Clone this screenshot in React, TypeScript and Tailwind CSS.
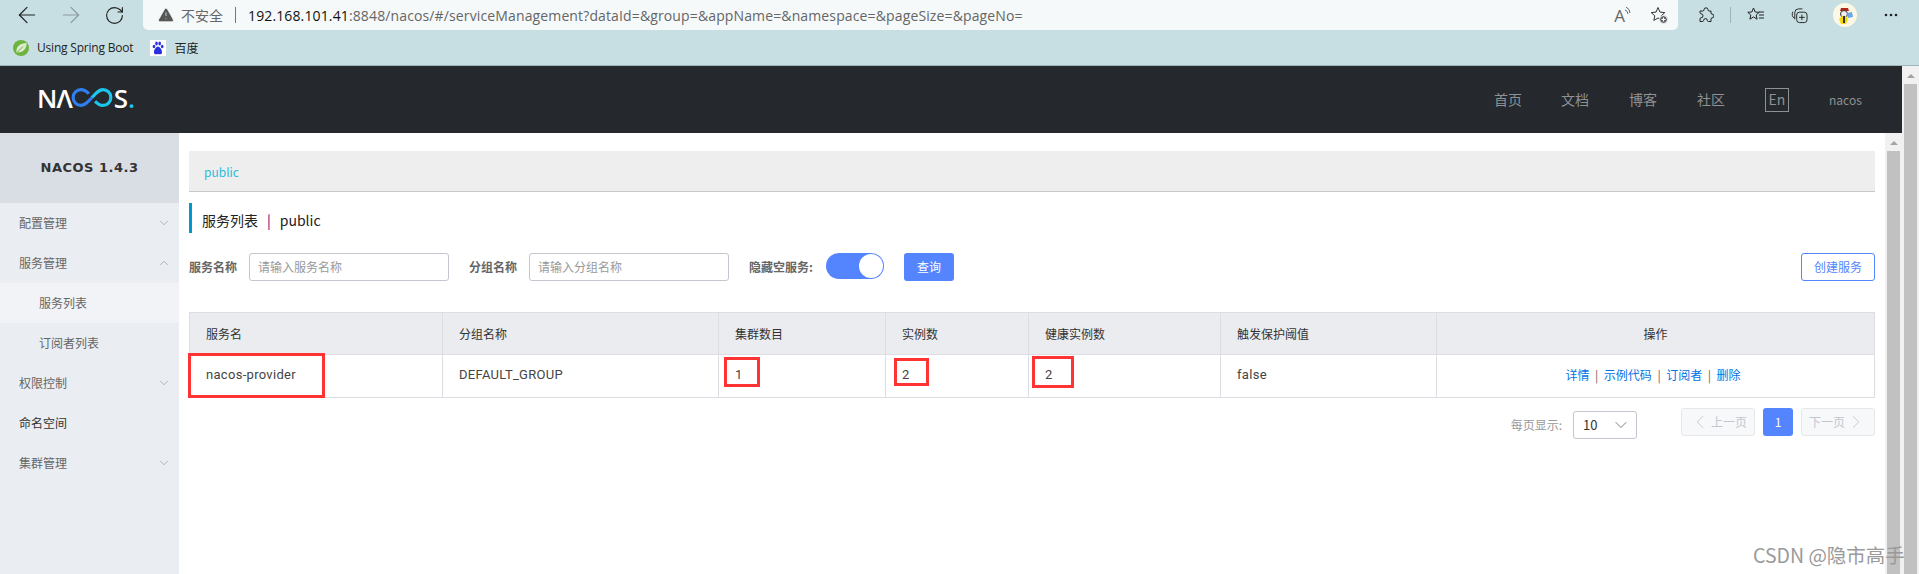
import { ArrowLeft, ArrowRight, ChevronDown, ChevronLeft, ChevronRight, ChevronUp, RotateCw, TriangleAlert } from "lucide-react";

const MENU = [
  { label: "配置管理", arrow: "down" },
  { label: "服务管理", arrow: "up" },
  { label: "服务列表", sub: true, active: true },
  { label: "订阅者列表", sub: true },
  { label: "权限控制", arrow: "down" },
  { label: "命名空间", dark: true },
  { label: "集群管理", arrow: "down" },
];

const COLUMNS = [
  { title: "服务名", width: "w-[253px]", value: "nacos-provider" },
  { title: "分组名称", width: "w-[276px]", value: "DEFAULT_GROUP" },
  { title: "集群数目", width: "w-[167px]", value: "1" },
  { title: "实例数", width: "w-[143px]", value: "2" },
  { title: "健康实例数", width: "w-[192px]", value: "2" },
  { title: "触发保护阈值", width: "w-[216px]", value: "false" },
];

function BrowserChrome() {
  return (
    <div className="h-[66px] border-b border-[#9db4b8] bg-[#c7dfe3]">
      <div className="flex h-[30px] items-center">
        <div className="flex w-[143px] shrink-0 items-center pl-[14px]">
          <ArrowLeft size={26} strokeWidth={1.1} className="text-[#222]" />
          <ArrowRight size={26} strokeWidth={1.1} className="ml-[18px] text-[#8c9a9d]" />
          <RotateCw size={21} strokeWidth={1.3} className="ml-[20px] text-[#222]" />
        </div>
        <div className="flex h-[30px] w-[1535px] shrink-0 items-center rounded-b-[5px] bg-[#f5f9fa] pl-[14px] pr-[10px]">
          <TriangleAlert size={18} fill="#555" strokeWidth={1} className="text-[#f5f9fa]" />
          <span className="ml-[6px] text-[14px] text-[#666]">不安全</span>
          <span className="mx-[12px] h-[16px] w-px bg-[#777]" />
          <span className="text-[14px] tracking-[0.13px] text-[#666] font-['Open_Sans','Noto_Sans_CJK_SC',sans-serif]">
            <span className="text-[#111]">192.168.101.41</span>:8848/nacos/#/serviceManagement?dataId=&amp;group=&amp;appName=&amp;namespace=&amp;pageSize=&amp;pageNo=
          </span>
          <span className="ml-auto flex items-center gap-[19px] text-[#666]">
            <span className="flex items-start text-[17px] leading-none font-['Open_Sans',sans-serif]">
              A
              <svg width="6" height="12" viewBox="0 0 6 12" fill="none" stroke="#666">
                <path d="M0 3q3 1 3 4M1 0q4 2 4 6" />
              </svg>
            </span>
            <svg width="18" height="18" viewBox="0 0 18 18" fill="none" stroke="#333" strokeWidth="1">
              <path d="M8 1.500l2 4.600 4.800.5-3.600 3.200 1 4.600L8 12l-4.200 2.400 1-4.600L1.200 6.600l4.800-.5z" />
              <circle cx="13.500" cy="13.500" r="4" fill="#666" stroke="#f5f9fa" />
              <path d="M13.500 11.500v4M11.500 13.500h4" stroke="#fff" />
            </svg>
          </span>
        </div>
        <div className="flex flex-1 items-center pl-[20px] text-[#222]">
          <svg width="16" height="16" viewBox="0 0 16 16" fill="none" stroke="#222" strokeLinejoin="round">
            <path d="M6 2.800a2 2 0 0 1 4 0c0 .8.500 1.200 1.200 1.200h1.800v2c0 .7.300 1 1 1.100a1.900 1.900 0 0 1 0 3.800c-.7.1-1 .4-1 1.100v2.500h-2.500c-.7 0-1-.3-1.100-1a1.900 1.900 0 0 0-3.800 0c-.1.700-.4 1-1.100 1H2v-2.700c0-.6.400-.9 1-1a2 2 0 0 0 0-4c-.6-.1-1-.4-1-1V4h2.800C5.500 4 6 3.600 6 2.800z" />
          </svg>
          <span className="ml-[16px] h-[16px] w-px bg-[#9db4b8]" />
          <svg className="ml-[16px]" width="18" height="16" viewBox="0 0 18 16" fill="none" stroke="#222">
            <path d="M6.500 1l1.700 4 4 .3-3 2.700.9 4.200-3.600-2.300-3.600 2.300.9-4.200-3-2.700 4-.3z" />
            <path d="M12 5h5M12 8h5M12 11h5" />
          </svg>
          <svg className="ml-[26px]" width="17" height="17" viewBox="0 0 18 18" fill="none" stroke="#222">
            <path d="M4 13V6a4 4 0 0 1 4-4h4M3.500 12c-2-1.500-3-4-1.500-7" />
            <rect x="6" y="5.500" width="11" height="11" rx="3" />
            <path d="M11.500 8v6M8.500 11h6" />
          </svg>
          <span className="ml-[25px] flex h-[24px] w-[24px] items-center justify-center overflow-hidden rounded-full bg-[#fdf8e4]">
            <svg width="18" height="20" viewBox="0 0 18 20">
              <path d="M5 3h7l1 3H4z" fill="#b3261e" />
              <circle cx="8" cy="9" r="3.500" fill="#eee" stroke="#333" />
              <path d="M3 14l3-3h4l2 3-2 5H5z" fill="#f5d90a" />
              <path d="M11 8l5-1 1 5-5 1z" fill="#6ba7e8" />
              <path d="M7 11h2v7H7z" fill="#333" />
            </svg>
          </span>
          <svg className="ml-[27px]" width="14" height="4" viewBox="0 0 14 4" fill="#222">
            <circle cx="2" cy="2" r="1.300" />
            <circle cx="7" cy="2" r="1.300" />
            <circle cx="12" cy="2" r="1.300" />
          </svg>
        </div>
      </div>
      <div className="flex h-[36px] items-center pb-[1px] pl-[13px] text-[12px] text-[#222]">
        <svg width="16" height="16" viewBox="0 0 16 16">
          <circle cx="8" cy="8" r="8" fill="#6db33f" />
          <path d="M3.500 12.500C2.500 7 7 3 13.500 3c.5 5.500-3.500 10-10 9.500z" fill="#dcebcf" />
          <path d="M4 12.500L10 6.500" stroke="#6db33f" />
        </svg>
        <span className="ml-[8px] tracking-[-0.2px] font-['Open_Sans',sans-serif]">Using Spring Boot</span>
        <span className="ml-[17px] flex h-[16px] w-[16px] items-center justify-center bg-white">
          <svg width="14" height="14" viewBox="0 0 14 14" fill="#2932e1">
            <ellipse cx="3" cy="5.500" rx="1.300" ry="1.800" />
            <ellipse cx="5.500" cy="2.500" rx="1.300" ry="1.900" />
            <ellipse cx="8.700" cy="2.500" rx="1.300" ry="1.900" />
            <ellipse cx="11.200" cy="5.500" rx="1.300" ry="1.800" />
            <path d="M7 5.500c2 0 4.500 4 4 6.500-.4 1.500-2.500 1.400-4 1-1.500.4-3.600.5-4-1-.5-2.500 2-6.500 4-6.500z" />
          </svg>
        </span>
        <span className="ml-[8px]">百度</span>
      </div>
    </div>
  );
}

function NacosLogo() {
  return (
    <div aria-label="NACOS" className="mb-[4px] flex items-center text-[26px] leading-none font-semibold text-white font-['Open_Sans',sans-serif]">
      <span>N</span>
      <span className="-ml-[1px]">Λ</span>
      <svg width="44" height="21" viewBox="0 0 42 20" fill="none" strokeWidth="3" className="-ml-[3px]">
        <path d="M18 6.500C15 3 13 2.500 10.500 2.500a7.500 7.500 0 0 0 0 15c4 0 6.500-3 10.500-7.500" stroke="#2f7ff0" />
        <path d="M21 10c4-4.500 6.500-7.500 10.500-7.500a7.500 7.500 0 0 1 0 15c-2.500 0-4.500-.5-7.500-4" stroke="#1cc6ee" />
      </svg>
      <span>S</span>
      <span className="text-[#1cc6ee]">.</span>
    </div>
  );
}

function TopNav() {
  return (
    <div className="flex h-[67px] items-center bg-[#25292e] pl-[37px]">
      <NacosLogo />
      <div className="ml-auto flex items-center text-[14px] text-[#8f9193]">
        <span>首页</span>
        <span className="ml-[39px]">文档</span>
        <span className="ml-[40px]">博客</span>
        <span className="ml-[40px]">社区</span>
        <span className="ml-[40px] flex h-[24px] w-[24px] items-center justify-center border border-[#8f9193] pb-[1px] text-[14px]">En</span>
        <span className="ml-[40px] mr-[40px] w-[33px] text-[12px]">nacos</span>
      </div>
    </div>
  );
}

function Sidebar() {
  return (
    <div className="w-[179px] shrink-0 bg-[#eaedf1]">
      <div className="flex h-[70px] items-center justify-center bg-[#d9dde4] text-[13px] font-bold tracking-[0.5px] text-[#333] font-['DejaVu_Sans',sans-serif]">
        NACOS 1.4.3
      </div>
      {MENU.map((m) => (
        <div
          key={m.label}
          className={`flex h-[40px] items-center justify-between text-[12px] ${m.sub ? "pl-[39px]" : "pl-[19px]"} pr-[8px] ${m.active ? "bg-[#f2f3f7]" : ""} ${m.dark ? "text-[#333]" : "text-[#666]"}`}
        >
          <span>{m.label}</span>
          {m.arrow === "down" && <ChevronDown size={14} strokeWidth={1} className="text-[#888]" />}
          {m.arrow === "up" && <ChevronUp size={14} strokeWidth={1} className="text-[#888]" />}
        </div>
      ))}
    </div>
  );
}

function Filters() {
  return (
    <div className="mt-[20px] flex h-[28px] items-start text-[12px]">
      <span className="w-[60px] font-semibold leading-[28px] text-[#666]">服务名称</span>
      <div className="flex h-[28px] w-[200px] items-center rounded-[3px] border border-[#c4c6cf] pl-[8px] text-[#999]">请输入服务名称</div>
      <span className="ml-[20px] w-[60px] font-semibold leading-[28px] text-[#666]">分组名称</span>
      <div className="flex h-[28px] w-[200px] items-center rounded-[3px] border border-[#c4c6cf] pl-[8px] text-[#999]">请输入分组名称</div>
      <span className="ml-[20px] w-[77px] font-semibold leading-[28px] text-[#666]">隐藏空服务:</span>
      <div className="flex h-[26px] w-[58px] items-center justify-end rounded-full bg-[#5584ff] pr-[1px]">
        <div className="h-[24px] w-[24px] rounded-full bg-white" />
      </div>
      <button className="ml-[20px] h-[28px] w-[50px] rounded-[3px] bg-[#5584ff] text-white">查询</button>
      <button className="ml-auto h-[28px] w-[74px] rounded-[3px] border border-[#5584ff] bg-white text-[#5584ff]">创建服务</button>
    </div>
  );
}

function ServiceTable() {
  return (
    <div className="mt-[31px] border border-[#dcdee3] text-[12px]">
      <div className="flex h-[42px] border-b border-[#dcdee3] bg-[#ebecf0] text-[#333]">
        {COLUMNS.map((c) => (
          <div key={c.title} className={`${c.width} flex shrink-0 items-center border-r border-[#dcdee3] pl-[16px]`}>{c.title}</div>
        ))}
        <div className="flex flex-1 items-center justify-center">操作</div>
      </div>
      <div className="flex h-[42px] text-[#333]">
        {COLUMNS.map((c) => (
          <div key={c.title} className={`${c.width} flex shrink-0 items-center border-r border-[#dcdee3] pb-[2px] pl-[16px] text-[13px] tracking-[0.3px] text-[#444] font-['Roboto',sans-serif]`}>{c.value}</div>
        ))}
        <div className="flex flex-1 items-center justify-center pb-[2px] pr-[5px] text-[#0073e6]">
          <span>详情</span>
          <span className="mx-[5.500px] text-[#666]">|</span>
          <span>示例代码</span>
          <span className="mx-[5.500px] text-[#666]">|</span>
          <span>订阅者</span>
          <span className="mx-[5.500px] text-[#666]">|</span>
          <span>删除</span>
        </div>
      </div>
    </div>
  );
}

function Pagination() {
  return (
    <div className="mt-[10px] flex items-start justify-end text-[12px]">
      <span className="mt-[3px] leading-[28px] text-[#999]">每页显示:</span>
      <div className="ml-[11px] mt-[3px] flex h-[28px] w-[64px] items-center justify-between rounded-[3px] border border-[#c4c6cf] pl-[9px] pr-[5px] text-[#333]">
        <span className="text-[13px]">10</span>
        <ChevronDown size={20} strokeWidth={1} className="text-[#666]" />
      </div>
      <div className="ml-[44px] flex h-[28px] w-[74px] items-center justify-center rounded-[3px] border border-[#e6e7eb] bg-[#f7f8fa] text-[#c4c6cf]">
        <ChevronLeft size={22} strokeWidth={1} />
        上一页
      </div>
      <div className="ml-[8px] flex h-[28px] w-[30px] items-center justify-center rounded-[3px] bg-[#5584ff] text-white">1</div>
      <div className="ml-[8px] flex h-[28px] w-[74px] items-center justify-center rounded-[3px] border border-[#e6e7eb] bg-[#f7f8fa] text-[#c4c6cf]">
        下一页
        <ChevronRight size={22} strokeWidth={1} />
      </div>
    </div>
  );
}

function Scrollbar() {
  return (
    <div className="flex w-[17px] shrink-0 flex-col items-center bg-[#f1f1f1]">
      <div className="mt-[8px] h-0 w-0 border-x-[4px] border-b-[4px] border-x-transparent border-b-[#a3a3a3]" />
      <div className="mt-[6px] w-[13px] flex-1 bg-[#c1c1c1]" />
    </div>
  );
}

function RedBox({ className }: { className: string }) {
  return <div className={`absolute border-[3px] border-[#ff3333] ${className}`} />;
}

export default function App() {
  return (
    <div className="relative flex h-[574px] w-[1919px] flex-col overflow-hidden bg-white font-['Noto_Sans_CJK_SC','Noto_Sans',sans-serif]">
      <BrowserChrome />
      <div className="flex min-h-0 flex-1">
        <div className="flex min-w-0 flex-1 flex-col">
          <TopNav />
          <div className="flex min-h-0 flex-1">
            <Sidebar />
            <div className="flex-1 pl-[10px] pr-[10px] pt-[18px]">
              <div className="flex h-[41px] items-center border-b border-[#c9c9c9] bg-[#eeeeee] pl-[15px] pt-[2px] text-[12px] text-[#2dbcdc]">public</div>
              <div className="mt-[11px] flex h-[30px] items-center border-l-[3px] border-[#0099cc] pl-[10px] pt-[5px] text-[14px] text-[#222]">
                服务列表<span className="mx-[9px] text-[#4b0082]">|</span>public
              </div>
              <Filters />
              <ServiceTable />
              <Pagination />
            </div>
            <Scrollbar />
          </div>
        </div>
        <Scrollbar />
      </div>

      <RedBox className="left-[188px] top-[353px] h-[45px] w-[137px]" />
      <RedBox className="left-[724px] top-[357px] h-[30px] w-[36px]" />
      <RedBox className="left-[894px] top-[358px] h-[28px] w-[35px]" />
      <RedBox className="left-[1032px] top-[356px] h-[32px] w-[42px]" />
      <div className="absolute left-[1753px] top-[542px] text-[19.500px] leading-[26px] text-[#9a9a9a]">CSDN @隐市高手</div>
    </div>
  );
}
